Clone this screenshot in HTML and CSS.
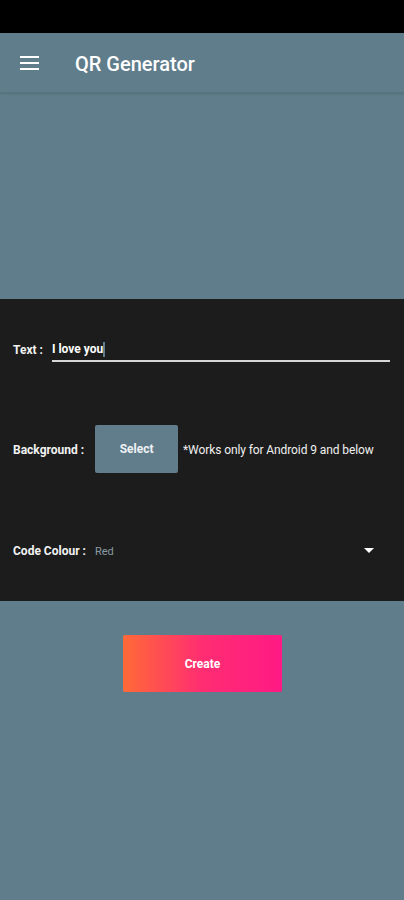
FILE: index.html
```html
<!DOCTYPE html>
<html>
<head>
<meta charset="utf-8">
<link rel="stylesheet" href="styles.css">
</head>
<body>
<div class="status"></div>
<header class="toolbar">
  <svg class="menu" width="20" height="14" viewBox="0 0 20 14"><rect x="0" y="0" width="19" height="2" fill="#fff"/><rect x="0" y="6" width="19" height="2" fill="#fff"/><rect x="0" y="12" width="19" height="2" fill="#fff"/></svg>
  <span class="title">QR Generator</span>
</header>
<div class="spacer"></div>
<section class="panel">
  <div class="row row-text">
    <span class="label">Text :</span>
    <div class="input"><span class="val">I love you</span><span class="cursor"></span></div>
  </div>
  <div class="row row-bg">
    <span class="label">Background :</span>
    <div class="select-btn">Select</div>
    <span class="note">*Works only for Android 9 and below</span>
  </div>
  <div class="row row-col">
    <span class="label">Code Colour :</span>
    <span class="red">Red</span>
    <svg class="tri" width="10" height="6" viewBox="0 0 10 6"><path d="M0 0 L10 0 L5 5 Z" fill="#fff"/></svg>
  </div>
</section>
<div class="bottom">
  <div class="create">Create</div>
</div>
</body>
</html>
```

FILE: styles.css
```css
html, body { margin: 0; padding: 0; }
body {
  width: 404px;
  height: 900px;
  background: #607d8b;
  font-family: Roboto, "Noto Sans", sans-serif;
  color: #fff;
  overflow: hidden;
}
.status { height: 33px; background: #000; }
.toolbar {
  height: 59px;
  display: flex;
  align-items: center;
  border-bottom: 1px solid #587481;
  box-shadow: 0 1px 2px rgba(0,0,0,0.12);
}
.menu { margin-left: 20px; margin-top: 0px; }
.title {
  margin-left: 35px;
  font-size: 20px;
  font-weight: 500;
  margin-top: 3px;
}
.spacer { height: 206px; }
.panel {
  background: #1c1c1c;
  height: 302px;
  position: relative;
  display: flex;
  flex-direction: column;
}
.row { display: flex; align-items: center; }
.label { font-size: 12px; font-weight: 700; color: #f2f2f2; margin-left: 13px; }
.row-text { margin-top: 37px; height: 26px; align-items: flex-end; }
.row-text .label { margin-bottom: 5px; }
.input {
  margin-left: 9px;
  width: 338px;
  height: 26px;
  border-bottom: 2px solid #d6d6d6;
  display: flex;
  align-items: flex-end;
  padding-bottom: 4px;
  box-sizing: border-box;
}
.val { font-size: 12px; font-weight: 700; color: #fff; }
.cursor { display: inline-block; width: 2px; height: 15px; background: #607d8b; margin-left: 0; margin-bottom: -1px; }
.row-bg { margin-top: 63px; height: 48px; }
.row-bg .label, .row-bg .note { margin-top: 2px; }
.select-btn {
  margin-left: 11px;
  width: 83px;
  height: 48px;
  background: #617d8b;
  border-radius: 2px;
  display: flex;
  align-items: center;
  justify-content: center;
  font-size: 12px;
  font-weight: 700;
  color: #eef2f4;
}
.note { margin-left: 5px; font-size: 12px; color: #f0f0f0; letter-spacing: -0.1px; }
.row-col { margin-top: 68px; height: 20px; }
.red { margin-left: 9px; font-size: 11px; color: #8a9aa3; }
.tri { margin-left: auto; margin-right: 30px; }
.bottom { display: flex; justify-content: center; padding-top: 34px; }
.create {
  width: 159px;
  height: 57px;
  margin-left: 1px;
  border-radius: 2px;
  background: linear-gradient(90deg, #ff6a37 0%, #ff2d72 50%, #ff1a84 100%);
  display: flex;
  align-items: center;
  justify-content: center;
  font-size: 12px;
  font-weight: 700;
  color: #fff;
}
```
